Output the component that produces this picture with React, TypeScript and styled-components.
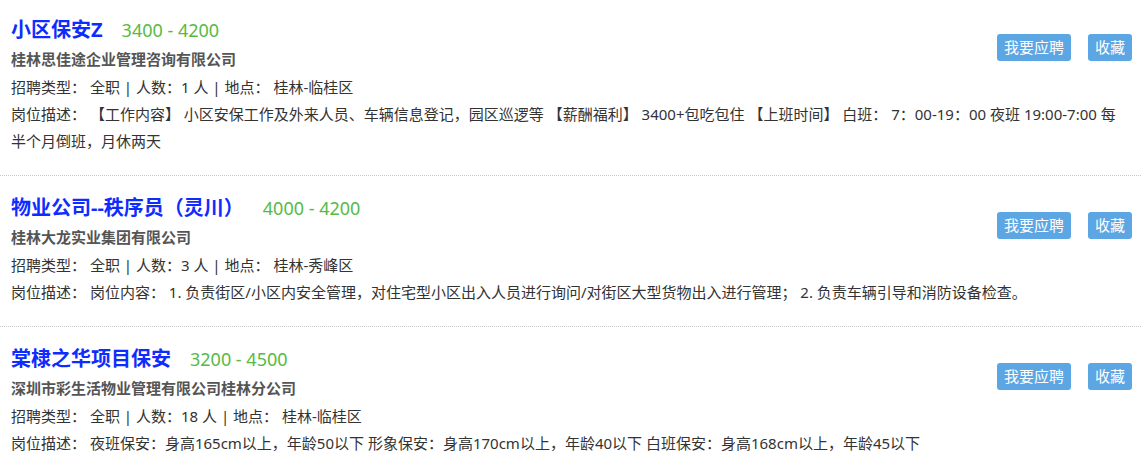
import React from 'react';
import styled, { createGlobalStyle } from 'styled-components';

const GlobalStyle = createGlobalStyle`
  html, body {
    margin: 0;
    padding: 0;
    background: #fff;
  }
  body {
    font-family: "Noto Sans", "Noto Sans CJK SC", sans-serif;
  }
`;

type Job = {
  title: string;
  salary: string;
  company: string;
  count: number;
  place: string;
  desc: string;
};

const jobs: Job[] = [
  {
    title: '小区保安Z',
    salary: '3400 - 4200',
    company: '桂林思佳途企业管理咨询有限公司',
    count: 1,
    place: '桂林-临桂区',
    desc: '【工作内容】 小区安保工作及外来人员、车辆信息登记，园区巡逻等 【薪酬福利】 3400+包吃包住 【上班时间】 白班： 7：00-19：00 夜班 19:00-7:00 每半个月倒班，月休两天',
  },
  {
    title: '物业公司--秩序员（灵川）',
    salary: '4000 - 4200',
    company: '桂林大龙实业集团有限公司',
    count: 3,
    place: '桂林-秀峰区',
    desc: '岗位内容： 1. 负责街区/小区内安全管理，对住宅型小区出入人员进行询问/对街区大型货物出入进行管理； 2. 负责车辆引导和消防设备检查。',
  },
  {
    title: '棠棣之华项目保安',
    salary: '3200 - 4500',
    company: '深圳市彩生活物业管理有限公司桂林分公司',
    count: 18,
    place: '桂林-临桂区',
    desc: '夜班保安：身高165cm以上，年龄50以下 形象保安：身高170cm以上，年龄40以下 白班保安：身高168cm以上，年龄45以下',
  },
];

export default function App() {
  return (
    <>
      <GlobalStyle />
      <JobList>
        {jobs.map((job) => (
          <JobItem key={job.title}>
            <Header>
              <Info>
                <TitleRow>
                  <Title>{job.title}</Title>
                  <Salary>{job.salary}</Salary>
                </TitleRow>
                <Company>{job.company}</Company>
                <Line>
                  招聘类型： 全职 | 人数：{job.count} 人 | 地点： {job.place}
                </Line>
              </Info>
              <Actions>
                <ActionButton>我要应聘</ActionButton>
                <ActionButton>收藏</ActionButton>
              </Actions>
            </Header>
            <Desc>岗位描述： {job.desc}</Desc>
          </JobItem>
        ))}
      </JobList>
    </>
  );
}

const JobList = styled.ul`
  list-style: none;
  margin: 0;
  padding: 0;
  width: 1141px;
`;

const JobItem = styled.li`
  padding: 17px 9px 20px 11px;
  border-bottom: 1px dotted #c8c8c8;

  &:first-child {
    padding-top: 15px;
  }
`;

const Header = styled.div`
  display: flex;
  justify-content: space-between;
  align-items: flex-start;
`;

const Info = styled.div`
  display: flex;
  flex-direction: column;
`;

const TitleRow = styled.div`
  display: flex;
  align-items: baseline;
  height: 30px;
  line-height: 30px;
`;

const Title = styled.h3`
  margin: 0;
  font-size: 20px;
  font-weight: bold;
  color: #0f2cff;
`;

const Salary = styled.span`
  margin-left: 19px;
  font-size: 18px;
  color: #55bb44;
`;

const Company = styled.div`
  font-size: 15px;
  line-height: 28px;
  font-weight: bold;
  color: #555;
`;

const Line = styled.div`
  font-size: 15px;
  line-height: 28px;
  color: #333;
  white-space: pre-wrap;
`;

const Desc = styled(Line)`
  max-width: 1106px;
  line-height: 27px;
`;

const Actions = styled.div`
  display: flex;
  gap: 17px;
  padding-top: 19px;
`;

const ActionButton = styled.button`
  height: 27px;
  padding: 0 7px;
  border: none;
  border-radius: 3px;
  background: #5ca6e4;
  color: #fff;
  font-family: "Noto Sans", "Noto Sans CJK SC", sans-serif;
  font-size: 15px;
  line-height: 27px;
  cursor: pointer;
`;
